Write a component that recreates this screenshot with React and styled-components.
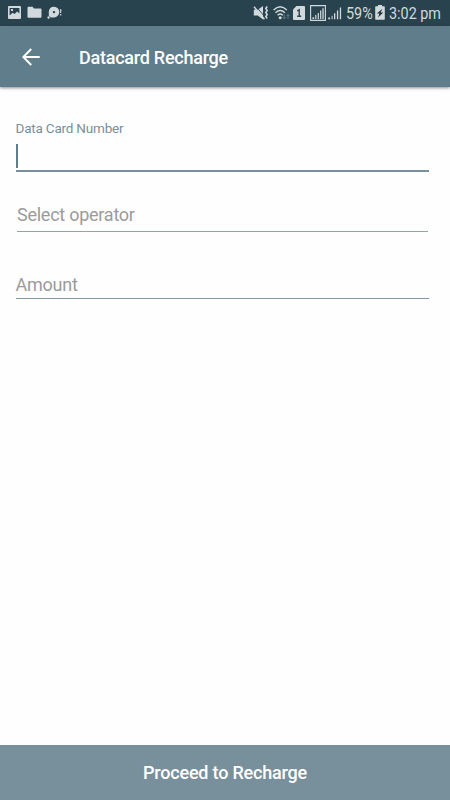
import React from 'react';
import styled, { createGlobalStyle } from 'styled-components';

const App = () => {
  return (
    <>
      <GlobalStyle />
      <Screen>
        <StatusBar />
        <AppBar>
          <BackButton aria-label="Back">
            <svg width="18" height="18" viewBox="0 0 18 18">
              <path
                d="M17.7 9H1.5M9.2 1L1.3 9l7.9 8"
                fill="none"
                stroke="currentColor"
                strokeWidth="2"
              />
            </svg>
          </BackButton>
          <Title>Datacard Recharge</Title>
        </AppBar>

        <Form>
          <Label htmlFor="card-number">Data Card Number</Label>
          <ActiveField id="card-number">
            <Caret />
          </ActiveField>
          <OperatorField>Select operator</OperatorField>
          <AmountField>Amount</AmountField>
        </Form>

        <ProceedButton>Proceed to Recharge</ProceedButton>
      </Screen>
    </>
  );
};

const StatusBar = () => (
  <StatusWrapper>
    <Glyph width="13" height="13" viewBox="0 0 13 13" $gap={6}>
      <path
        fillRule="evenodd"
        d="M1 0h11a1 1 0 0 1 1 1v11a1 1 0 0 1-1 1H1a1 1 0 0 1-1-1V1a1 1 0 0 1 1-1zM1.6 2v7.4l3-2.6 2 1.2 2.6-2.6 2.2 2V2zM3 3h2v2H3z"
      />
    </Glyph>
    <Glyph width="15" height="13" viewBox="0 0 15 13" $gap={5}>
      <path d="M1.5.8h4L7 2.4h6.5q1 0 1 1v7.4q0 1-1 1h-12q-1 0-1-1v-9q0-1 1-1z" />
    </Glyph>
    <Glyph width="16" height="14" viewBox="0 0 16 14">
      <path
        fillRule="evenodd"
        d="M7 .8a5.3 5.3 0 0 1 0 10.6H4L1.8 9.8V5.5A5.3 5.3 0 0 1 7 .8zM7 4.9a1.2 1.2 0 1 0 0 2.4 1.2 1.2 0 0 0 0-2.4z"
      />
      <circle cx="1.6" cy="11.5" r="1.2" />
      <path d="M13 3.2h1.4L14.2 7h-1zM13.1 8h1.2v1.5h-1.2z" />
    </Glyph>

    <Spacer />

    <Glyph width="16" height="16" viewBox="0 0 16 16" $gap={4}>
      <path d="M.8 4.8h4L10 1v13.6l-5.2-4h-4z" />
      <path d="M3 1.4l8 9.4" stroke="#29434e" strokeWidth="0.9" />
      <path d="M1 1.8l10.4 12.4" stroke="#d2d9dc" strokeWidth="1.4" />
      <path
        d="M14.2 1.5l-1.4 2 1.4 2-1.4 2 1.4 2-1.4 2 1.4 2"
        fill="none"
        stroke="#d2d9dc"
        strokeWidth="1.5"
      />
    </Glyph>
    <Glyph width="18" height="16" viewBox="0 0 18 16" $gap={2}>
      <path
        d="M.6 5q6.6-6.6 13.2 0M2.5 7.7q4.7-4.5 9.4 0M4.6 10.3q2.6-2.4 5.2 0"
        fill="none"
        stroke="#d2d9dc"
        strokeWidth="1.4"
      />
      <circle cx="7.2" cy="12.7" r="1.5" />
      <path
        d="M11.2 9.5v4.3M9.7 12.2l1.5 1.6 1.5-1.6M15 14V9.5M13.6 11l1.4-1.5 1.4 1.5"
        fill="none"
        stroke="#667b84"
      />
    </Glyph>
    <Glyph width="12" height="14" viewBox="0 0 12 14" $gap={5}>
      <path d="M3.5 0H11q1 0 1 1v12q0 1-1 1H1q-1 0-1-1V3.5z" />
      <path
        d="M4.2 5l2-1.2V10M4.2 10.3h4"
        fill="none"
        stroke="#29434e"
        strokeWidth="1.4"
      />
    </Glyph>
    <Glyph width="16" height="16" viewBox="0 0 16 16" $gap={2}>
      <path
        d="M.6.6h14.8v14.8H.6z"
        fill="none"
        stroke="#d2d9dc"
        strokeWidth="1.1"
      />
      <path d="M2.5 12.3h1.6V14H2.5zM5.2 10h1.2v4H5.2zM7.7 8h1.2v6H7.7zM10.1 5.6h1.2V14h-1.2zM12.4 3.2h1.3V14h-1.3z" />
    </Glyph>
    <Glyph width="14" height="16" viewBox="0 0 14 16" $gap={4}>
      <path d="M.2 12.5h1.9v1.7H.2zM3.6 10.7h1v3.5h-1zM6 8.2h1.3v6H6zM8.9 5.4h1.3v8.8H8.9zM11.8 2.4h1.3v11.8h-1.3z" />
    </Glyph>
    <StatusText $width={27}>
      <span>59%</span>
    </StatusText>
    <Glyph width="10" height="15" viewBox="0 0 10 15" $gap={4}>
      <path d="M3 0h4v1.3h2q.8 0 .8.8v11.8q0 .8-.8.8H1q-.8 0-.8-.8V2.1q0-.8.8-.8h2z" />
      <path d="M7.5 3.8L1.8 8.4h2.7L3 12.6l5.3-5H5.6z" fill="#1e2f37" />
    </Glyph>
    <StatusText $width={52}>
      <span>3:02 pm</span>
    </StatusText>
  </StatusWrapper>
);

const GlobalStyle = createGlobalStyle`
  * {
    box-sizing: border-box;
  }

  body {
    margin: 0;
    background: #fefefe;
    font-family: Roboto, 'Liberation Sans', sans-serif;
  }
`;

const Screen = styled.div`
  height: 800px;
  width: 450px;
  display: flex;
  flex-direction: column;
  overflow: hidden;
`;

const StatusWrapper = styled.div`
  height: 26px;
  flex-shrink: 0;
  padding: 0 9px 1px 8px;
  background: #29434e;
  color: #d2d9dc;
  display: flex;
  align-items: center;
`;

const Glyph = styled.svg`
  flex-shrink: 0;
  fill: #d2d9dc;
  margin-right: ${(p) => p.$gap || 0}px;
`;

const Spacer = styled.div`
  flex: 1;
`;

// Narrow digits: the regular face is squeezed into a fixed slot
const StatusText = styled.div`
  width: ${(p) => p.$width}px;
  margin-right: ${(p) => (p.$width < 40 ? 2 : 0)}px;
  font-size: 17px;
  line-height: 25px;
  white-space: nowrap;
  padding-top: 1px;

  & span {
    display: inline-block;
    transform: scaleX(0.845);
    transform-origin: left;
  }
`;

const AppBar = styled.header`
  height: 61px;
  flex-shrink: 0;
  padding-left: 22px;
  background: #607d8b;
  color: #fff;
  box-shadow: 0 1px 3px rgba(0, 0, 0, 0.45);
  display: flex;
  align-items: center;
`;

const BackButton = styled.button`
  display: flex;
  padding: 0;
  border: none;
  background: none;
  color: inherit;
`;

const Title = styled.h1`
  margin: 0 0 0 39px;
  padding-top: 1px;
  font-size: 18px;
  font-weight: 500;
  letter-spacing: -0.25px;
`;

const Form = styled.main`
  flex: 1;
  padding: 32px 21px 0 16px;
  color: #9b9b9b;
`;

const Label = styled.label`
  display: block;
  height: 25px;
  font-size: 13.5px;
  letter-spacing: -0.2px;
  line-height: 18px;
  text-indent: -0.5px;
  color: #78909c;
`;

const ActiveField = styled.div`
  height: 28px;
  border-bottom: 2px solid #78909c;
`;

const Caret = styled.div`
  width: 2px;
  height: 24px;
  background: #607d8b;
`;

const Field = styled.div`
  font-size: 18px;
  letter-spacing: -0.25px;
  line-height: 22px;
  border-bottom: 1px solid #90a4ae;
`;

const OperatorField = styled(Field)`
  height: 28px;
  margin: 32px 1px 0;
`;

const AmountField = styled(Field)`
  height: 25px;
  margin-top: 42px;
  text-indent: -0.5px;
  border-color: #8198a3;
`;

const ProceedButton = styled.button`
  height: 55px;
  flex-shrink: 0;
  border: none;
  padding: 0;
  background: #78909c;
  color: #fff;
  font-family: inherit;
  font-size: 18px;
  font-weight: 500;
  letter-spacing: -0.2px;
`;

export default App;
